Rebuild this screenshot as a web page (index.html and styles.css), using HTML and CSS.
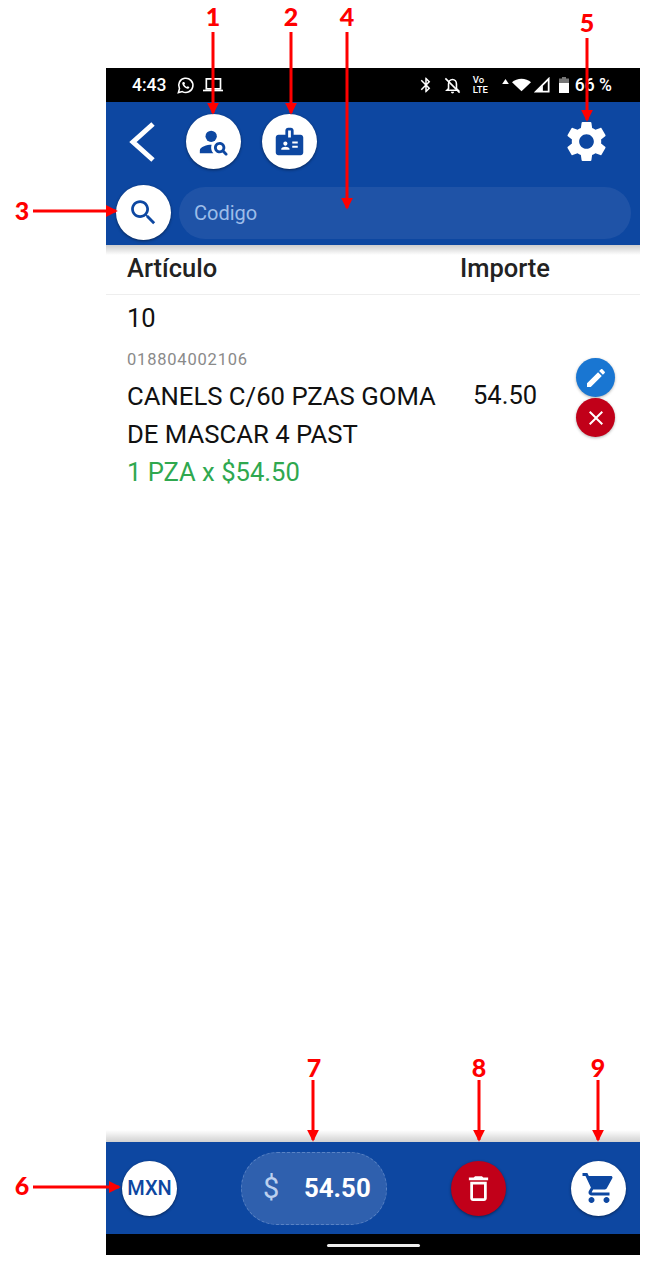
FILE: index.html
```html
<!DOCTYPE html>
<html lang="es">
<head>
<meta charset="utf-8">
<title>Venta</title>
<link rel="stylesheet" href="styles.css">
</head>
<body>
<main class="phone">
  <div class="status">
    <div class="status-left">
      <span class="clock">4:43</span>
      <svg class="si si-wa" viewBox="0 0 24 24"><path class="line" d="M3 21l1.4-5A9 9 0 1 1 8 19.700z"/><path class="solid" d="M9 7.500c-.8.400-1.300 1.300-1 2.500.6 2.500 3.500 5.500 6.300 6 1.200.2 2-.4 2.400-1.200l.1-1-2.100-1-1 1.100c-1.300-.5-2.700-1.800-3.200-3.100l.9-1-.9-2.200z"/></svg>
      <svg class="si si-lap" viewBox="0 0 24 20"><path class="line" d="M4 2h17v12H4z"/><path class="solid" d="M0 15h24v2H0z"/></svg>
    </div>
    <div class="status-right">
      <svg class="si si-bt" viewBox="0 0 24 24"><path class="solid" d="M17.700 7.700 12 2h-1v7.600L6.400 5 5 6.400 10.600 12 5 17.600 6.400 19l4.600-4.600V22h1l5.700-5.700-4.300-4.300 4.300-4.300zM13 5.800l1.900 1.900L13 9.600V5.800zm1.900 10.500L13 18.200v-3.800l1.900 1.900z"/></svg>
      <svg class="si si-bell" viewBox="0 0 24 24"><path class="line" d="M7 10c0-3 2-5.500 5-5.500s5 2.500 5 5.500v6l2 2H5l2-2z"/><path class="solid" d="M10 20h4a2 2 0 0 1-4 0z"/><path class="line" d="M3 3l18 18"/></svg>
      <span class="volte"><span>Vo</span><span>LTE</span></span>
      <svg class="si si-up" viewBox="0 0 8 6"><path class="solid" d="M4 0l4 6H0z"/></svg>
      <svg class="si si-wifi" viewBox="0 0 24 16"><path class="solid" d="M0 4.500C6-1.500 18-1.500 24 4.500L12 16z"/></svg>
      <svg class="si si-sig" viewBox="0 0 18 18"><path class="line" d="M16.500 2v14.500H2z"/><path class="solid" d="M10 9.500v7H2.500z"/></svg>
      <svg class="si si-bat" viewBox="0 0 10 16"><path class="dim" d="M3 0h4v1.500h3V6H0V1.500h3z"/><path class="solid" d="M0 6h10v10H0z"/></svg>
      <span class="pct">66 %</span>
    </div>
  </div>

  <header class="head">
    <div class="toolbar">
      <svg class="back" viewBox="0 0 26 40"><path d="M24 2 4 20l20 18"/></svg>
      <button class="fab fab-white"><svg class="ic-30" viewBox="0 0 24 24"><circle cx="10" cy="8" r="4"/><path d="M10.350 14.010C7.620 13.910 2 15.270 2 18v2h9.540c-2.470-2.760-1.230-5.890-1.190-5.990z"/><path d="M19.430 18.020c.47-.8.7-1.770.48-2.820-.34-1.640-1.720-2.950-3.380-3.160-2.630-.34-4.850 1.870-4.500 4.500.22 1.660 1.520 3.040 3.160 3.380 1.050.22 2.020-.01 2.820-.48l1.860 1.860c.39.39 1.020.39 1.410 0 .39-.39.39-1.020 0-1.410l-1.850-1.870zM16 18c-1.100 0-2-.9-2-2s.9-2 2-2 2 .9 2 2-.9 2-2 2z"/></svg></button>
      <button class="fab fab-white"><svg class="ic-32" viewBox="0 0 24 24"><path d="M20 7h-5V4c0-1.100-.9-2-2-2h-2c-1.100 0-2 .9-2 2v3H4c-1.100 0-2 .9-2 2v11c0 1.100.9 2 2 2h16c1.100 0 2-.9 2-2V9c0-1.100-.9-2-2-2zM9 12c.83 0 1.500.67 1.500 1.500S9.830 15 9 15s-1.500-.67-1.500-1.500S8.170 12 9 12zm3 6H6v-.75c0-1 2-1.500 3-1.500s3 .5 3 1.500V18zm1-9h-2V4h2v5zm5 7.500h-4V15h4v1.500zm0-3h-4V12h4v1.500z"/></svg></button>
      <svg class="gear" viewBox="0 0 24 24"><path d="M19.140 12.940c.04-.3.06-.61.06-.94 0-.32-.02-.64-.07-.94l2.030-1.580c.18-.14.23-.41.12-.61l-1.920-3.320c-.12-.22-.37-.29-.59-.22l-2.390.96c-.5-.38-1.030-.7-1.620-.94l-.36-2.540c-.04-.24-.24-.41-.48-.41h-3.840c-.24 0-.43.17-.47.41l-.36 2.540c-.59.24-1.130.57-1.620.94l-2.390-.96c-.22-.08-.47 0-.59.22L2.740 8.870c-.12.21-.08.47.12.61l2.030 1.580c-.05.3-.09.63-.09.94s.02.64.07.94l-2.030 1.580c-.18.14-.23.41-.12.61l1.920 3.320c.12.22.37.29.59.22l2.390-.96c.5.38 1.030.7 1.620.94l.36 2.540c.05.24.24.41.48.41h3.840c.24 0 .44-.17.47-.41l.36-2.540c.59-.24 1.130-.56 1.620-.94l2.390.96c.22.08.47 0 .59-.22l1.920-3.320c.12-.22.07-.47-.12-.61l-2.010-1.580zM12 15.600c-1.980 0-3.600-1.620-3.600-3.600s1.620-3.600 3.600-3.600 3.600 1.620 3.600 3.600-1.620 3.600-3.600 3.600z"/></svg>
    </div>
    <div class="searchrow">
      <button class="fab fab-white"><svg class="ic-32" viewBox="0 0 24 24"><path d="M15.500 14h-.79l-.28-.27C15.410 12.590 16 11.110 16 9.500 16 5.910 13.090 3 9.500 3S3 5.910 3 9.500 5.910 16 9.500 16c1.610 0 3.090-.59 4.230-1.570l.27.28v.79l5 4.990L20.490 19l-4.990-5zm-6 0C7.010 14 5 11.990 5 9.500S7.010 5 9.500 5 14 7.010 14 9.500 11.990 14 9.500 14z"/></svg></button>
      <div class="codebox">Codigo</div>
    </div>
  </header>

  <section class="table">
    <div class="thead">
      <span class="col-name">Artículo</span>
      <span class="col-amt">Importe</span>
    </div>
    <div class="qty">10</div>
    <div class="barcode">018804002106</div>
    <div class="item">
      <div class="col-name item-name">CANELS C/60 PZAS GOMA DE MASCAR 4 PAST</div>
      <div class="col-amt item-amt">54.50</div>
      <div class="actions">
        <button class="mini mini-blue"><svg viewBox="0 0 24 24"><path d="M3 17.250V21h3.750L17.810 9.940l-3.750-3.750L3 17.250zM20.710 7.040c.39-.39.39-1.020 0-1.410l-2.340-2.340c-.39-.39-1.020-.39-1.410 0l-1.830 1.830 3.750 3.750 1.830-1.830z"/></svg></button>
        <button class="mini mini-red"><svg viewBox="0 0 24 24"><path d="M19 6.410 17.590 5 12 10.590 6.410 5 5 6.410 10.590 12 5 17.590 6.410 19 12 13.410 17.590 19 19 17.590 13.410 12z"/></svg></button>
      </div>
    </div>
    <div class="price-line">1 PZA x $54.50</div>
  </section>

  <footer class="foot">
    <button class="fab fab-white currency">MXN</button>
    <div class="total"><span class="dollar">$</span><span class="sum">54.50</span></div>
    <button class="fab fab-red"><svg class="ic-32" viewBox="0 0 24 24"><path d="M16 9v10H8V9h8m-1.500-6h-5l-1 1H5v2h14V4h-3.500l-1-1zM18 7H6v12c0 1.100.9 2 2 2h8c1.100 0 2-.9 2-2V7z"/></svg></button>
    <button class="fab fab-white"><svg class="ic-34" viewBox="0 0 24 24"><path d="M7 18c-1.100 0-1.990.9-1.990 2S5.900 22 7 22s2-.9 2-2-.9-2-2-2zM1 2v2h2l3.600 7.590-1.350 2.450c-.16.28-.25.61-.25.96 0 1.100.9 2 2 2h12v-2H7.420c-.14 0-.25-.11-.25-.25l.03-.12.9-1.630h7.450c.75 0 1.410-.41 1.750-1.030l3.580-6.490c.08-.14.12-.31.12-.48 0-.55-.45-1-1-1H5.210l-.94-2H1zm16 16c-1.100 0-1.990.9-1.990 2s.89 2 1.990 2 2-.9 2-2-.9-2-2-2z"/></svg></button>
  </footer>
  <div class="navbar"><span class="home"></span></div>
</main>

<svg class="notes" viewBox="0 0 670 1272">
  <defs>
    <marker id="tip" markerWidth="4" markerHeight="4" refX="3.400" refY="2" orient="auto"><path d="M0 0l4 2-4 2z"/></marker>
  </defs>
  <g class="arrows">
    <path d="M213 32v81"/><path d="M291 32v81"/><path d="M347 32v176"/><path d="M587 38v82"/>
    <path d="M33 211h83"/><path d="M33 1187h86"/>
    <path d="M313 1080v60"/><path d="M479 1080v60"/><path d="M598 1080v60"/>
  </g>
  <g class="digits">
    <text x="213" y="26">1</text><text x="291" y="26">2</text><text x="347" y="26">4</text>
    <text x="587" y="32">5</text><text x="22" y="220">3</text><text x="22" y="1195">6</text>
    <text x="314" y="1077">7</text><text x="479" y="1077">8</text><text x="598" y="1077">9</text>
  </g>
</svg>
</body>
</html>
```

FILE: styles.css
```css
* { box-sizing: border-box; }
html, body { margin: 0; padding: 0; background: #fff; }
body { position: relative; width: 670px; height: 1272px; overflow: hidden; font-family: Roboto, "Liberation Sans", sans-serif; }
button { border: 0; padding: 0; font: inherit; }

.phone { width: 534px; height: 1187px; margin: 68px 0 0 106px; display: flex; flex-direction: column; background: #fff; position: relative; }
.phone::after { content: ""; position: absolute; left: 0; right: 0; top: 1062px; height: 12px; background: linear-gradient(to bottom, rgba(0,0,0,0), rgba(0,0,0,.18)); }

.status { height: 34px; flex: none; background: #000; color: #fff; display: flex; justify-content: space-between; align-items: center; padding: 0 28px 0 26px; }
.status-left, .status-right { display: flex; align-items: center; }
.clock { font-size: 17.500px; font-weight: 500; margin-right: 10px; }
.si { display: block; flex: none; }
.line { fill: none; stroke: #fff; stroke-width: 2; }
.solid { fill: #fff; }
.dim { fill: #777; }
.si-wa { width: 19px; height: 19px; margin-right: 8px; }
.si-lap { width: 20px; height: 17px; }
.si-bt { width: 18px; height: 18px; margin-right: 8px; }
.si-bell { width: 19px; height: 19px; margin-right: 11px; }
.volte { display: flex; flex-direction: column; font-size: 9.500px; line-height: 10px; font-weight: 500; width: 24px; margin-right: 5px; }
.si-up { width: 7px; height: 5px; margin: -8px 3px 0 0; }
.si-wifi { width: 19px; height: 14px; margin-right: 3px; }
.si-sig { width: 16px; height: 16px; margin-right: 9px; }
.si-bat { width: 10px; height: 16px; margin-right: 6px; }
.pct { font-size: 17.500px; font-weight: 500; }

.head { height: 143px; flex: none; background: #0d47a1; position: relative; z-index: 1; }
.head::after { content: ""; position: absolute; left: 0; right: 0; top: 100%; height: 10px; background: linear-gradient(to bottom, rgba(0,0,0,.2), rgba(0,0,0,0)); }
.toolbar { height: 79px; display: flex; align-items: center; padding-left: 23px; padding-right: 29px; }
.back { width: 26px; height: 40px; fill: none; stroke: #fff; stroke-width: 5; margin-right: 31px; }
.toolbar .fab + .fab { margin-left: 21px; }
.gear { width: 49px; height: 49px; fill: #fff; margin-left: auto; }
.searchrow { display: flex; align-items: center; padding: 0 9px 0 10px; margin-top: 4px; }
.codebox { flex: 1; height: 52px; margin-left: 8px; border-radius: 26px; background: #1f53a7; color: #9dbde9; font-size: 20px; line-height: 52px; padding-left: 15px; }

.fab { width: 55px; height: 55px; flex: none; border-radius: 50%; display: flex; align-items: center; justify-content: center; box-shadow: 0 1px 3px rgba(0,0,0,.45); }
.fab-white { background: #fff; }
.fab-white svg { fill: #0d47a1; }
.fab-red { background: #c10019; }
.fab-red svg { fill: #fff; }
.ic-30 { width: 34px; height: 34px; }
.ic-32 { width: 33px; height: 33px; }
.ic-34 { width: 36px; height: 36px; }

.table { flex: 1; padding-left: 21px; color: #111; }
.thead { height: 50px; margin-left: -21px; padding: 0 0 3px 21px; display: flex; align-items: center; border-bottom: 1px solid #eee; font-size: 25.500px; font-weight: 500; color: #222; }
.col-name { width: 333px; flex: none; }
.col-amt { flex: none; }
.qty { font-size: 25.500px; line-height: 30px; margin-top: 8px; }
.barcode { font-size: 16.500px; line-height: 20px; color: #8a8a8a; letter-spacing: .8px; margin-top: 17px; }
.item { display: flex; margin-top: 7px; position: relative; }
.item-name { font-size: 25.700px; line-height: 38px; }
.item-amt { font-size: 25.500px; line-height: 38px; margin-left: 13px; margin-top: -1px; }
.actions { position: absolute; left: 449px; top: -19px; display: flex; flex-direction: column; gap: 1px; }
.mini { width: 39px; height: 39px; border-radius: 50%; display: flex; align-items: center; justify-content: center; box-shadow: 0 1px 3px rgba(0,0,0,.3); }
.mini svg { width: 24px; height: 24px; fill: #fff; }
.mini-blue { background: #1976d2; }
.mini-red { background: #c10019; }
.price-line { font-size: 25.600px; line-height: 38px; color: #2fa84f; }

.foot { height: 92px; flex: none; background: #0d47a1; display: flex; align-items: center; padding: 0 0 0 16px; position: relative; z-index: 1; }
.currency { color: #0d47a1; font-size: 20px; font-weight: 500; }
.total { width: 146px; height: 73px; margin-left: 64px; margin-right: 64px; border-radius: 36px; background: #2f60ae; border: 1px dashed #5a83c4; display: flex; align-items: center; color: #fff; }
.dollar { font-size: 29px; color: #bcd0ef; margin-left: 21px; width: 41px; }
.sum { font-size: 25.800px; font-weight: 700; }
.foot .fab-red { margin-right: 65px; }
.navbar { height: 21px; flex: none; background: #000; position: relative; z-index: 1; display: flex; justify-content: center; padding-top: 10px; }
.home { width: 93px; height: 3px; border-radius: 2px; background: #eee; margin-left: 0; }

.notes { position: absolute; left: 0; top: 0; width: 670px; height: 1272px; z-index: 5; pointer-events: none; }
.arrows path { fill: none; stroke: #f00; stroke-width: 3; marker-end: url(#tip); }
marker path { fill: #f00; }
.digits text { fill: #f00; font-family: Lato, "Open Sans", sans-serif; font-weight: 900; font-size: 25px; text-anchor: middle; }
```
